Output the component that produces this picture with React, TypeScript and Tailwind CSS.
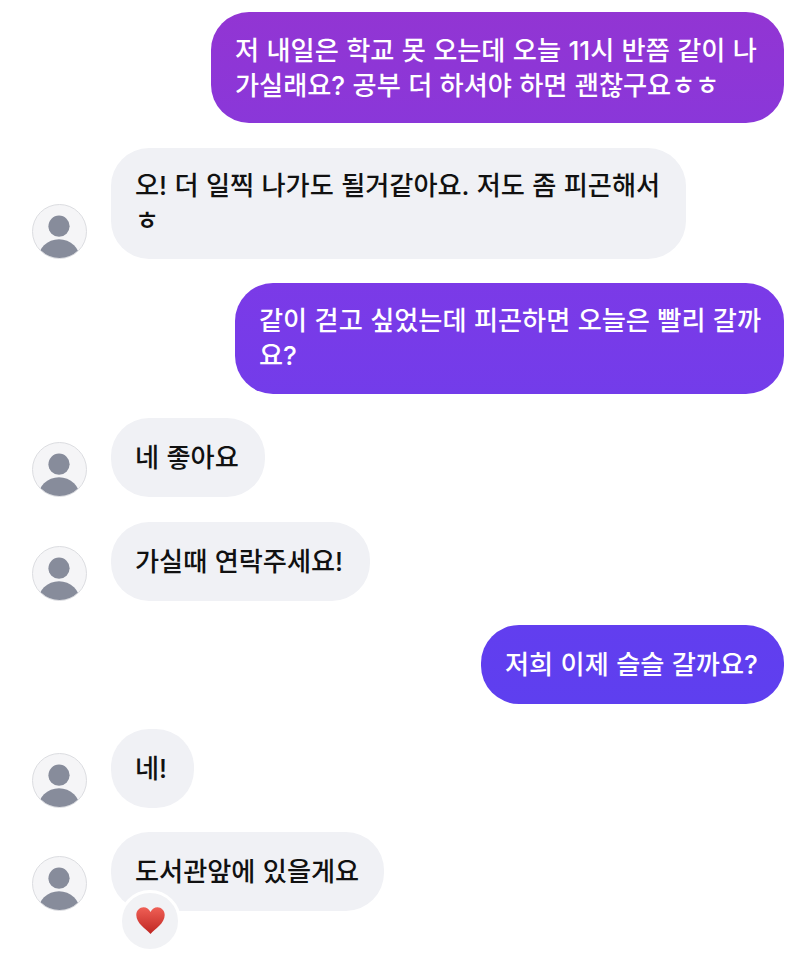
const FONT = "font-['Inter','Noto_Sans_CJK_KR',sans-serif]";

function Avatar() {
  return (
    <div className="h-[55px] w-[55px] shrink-0 overflow-hidden rounded-full border border-[#dcdde1] bg-[#f5f5f7]">
      <svg viewBox="0 0 55 55" className="h-full w-full">
        <circle cx="27" cy="22" r="11" fill="#878c9b" />
        <ellipse cx="27" cy="57" rx="22" ry="21.5" fill="#878c9b" />
      </svg>
    </div>
  );
}

function Sent({ width, color, lines }: { width: string; color: string; lines: string[] }) {
  return (
    <div className="flex justify-end pr-4">
      <div className={`flex min-h-[79px] flex-col justify-center rounded-[38px] px-6 py-[20.5px] text-[26.2px] font-medium leading-[35px] [word-spacing:0.4px] text-white whitespace-nowrap ${width} ${color}`}>
        {lines.map((l) => (
          <div key={l}>{l}</div>
        ))}
      </div>
    </div>
  );
}

function Received({ width, lines, children }: { width: string; lines: string[]; children?: React.ReactNode }) {
  return (
    <div className="flex items-end gap-6 pl-8">
      <Avatar />
      <div className={`relative flex min-h-[79px] flex-col justify-center rounded-[38px] bg-[#f0f1f5] px-6 py-[20.5px] text-[26.2px] font-medium leading-[35px] [word-spacing:0.4px] text-[#111] whitespace-nowrap ${width}`}>
        {lines.map((l) => (
          <div key={l}>{l}</div>
        ))}
        {children}
      </div>
    </div>
  );
}

export default function App() {
  return (
    <div className={`flex h-[953px] w-[800px] flex-col gap-[24.4px] overflow-hidden bg-white pt-[12.2px] ${FONT}`}>
      <Sent
        width="w-[573px]"
        color="bg-gradient-to-b from-[#9235d3] to-[#8a37d9]"
        lines={["저 내일은 학교 못 오는데 오늘 11시 반쯤 같이 나", "가실래요? 공부 더 하셔야 하면 괜찮구요ㅎㅎ"]}
      />
      <Received width="w-[575px]" lines={["오! 더 일찍 나가도 될거같아요. 저도 좀 피곤해서", "ㅎ"]} />
      <Sent
        width="w-[549px]"
        color="bg-gradient-to-b from-[#7b3ae7] to-[#733cea]"
        lines={["같이 걷고 싶었는데 피곤하면 오늘은 빨리 갈까", "요?"]}
      />
      <Received width="w-[154px]" lines={["네 좋아요"]} />
      <Received width="w-[259px]" lines={["가실때 연락주세요!"]} />
      <Sent width="w-[303px]" color="bg-gradient-to-b from-[#623eef] to-[#5e3fef]" lines={["저희 이제 슬슬 갈까요?"]} />
      <Received width="w-[83px]" lines={["네!"]} />
      <Received width="w-[273px]" lines={["도서관앞에 있을게요"]}>
        <div className="absolute left-[8px] top-[58px] flex h-[62px] w-[62px] items-center justify-center rounded-full border-[3px] border-white bg-[#f1f2f5]">
          <svg viewBox="0 0 29 27" className="h-[27px] w-[29px]">
            <defs>
              <linearGradient id="heart" x1="0" y1="0" x2="0" y2="1">
                <stop offset="0" stopColor="#ef5f55" />
                <stop offset="1" stopColor="#bf2622" />
              </linearGradient>
            </defs>
            <path
              d="M14.5 27C10 22 0.3 16.5 0.3 8C0.3 3.5 3.8 0.3 7.5 0.3C10.5 0.3 13 2 14.5 5C16 2 18.5 0.3 21.5 0.3C25.2 0.3 28.7 3.5 28.7 8C28.7 16.5 19 22 14.5 27Z"
              fill="url(#heart)"
            />
          </svg>
        </div>
      </Received>
    </div>
  );
}
